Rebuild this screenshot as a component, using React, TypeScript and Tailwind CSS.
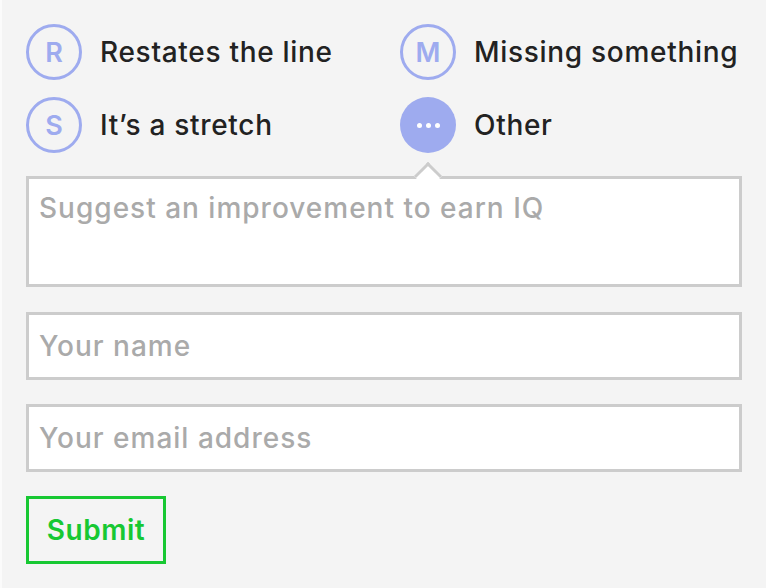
import React from "react";

const font = { fontFamily: "Inter, 'Noto Sans', sans-serif" };

function Letter({ l }: { l: string }) {
  return (
    <div className="w-[56px] h-[56px] rounded-full border-[3px] border-[#9eabef] flex items-center justify-center text-[#9eabef] text-[27px] font-semibold leading-none shrink-0">
      {l}
    </div>
  );
}

function Dots() {
  return (
    <div className="w-[56px] h-[56px] rounded-full bg-[#9eabef] flex items-center justify-center gap-[4px] shrink-0">
      <span className="w-[5px] h-[5px] rounded-full bg-white" />
      <span className="w-[5px] h-[5px] rounded-full bg-white" />
      <span className="w-[5px] h-[5px] rounded-full bg-white" />
    </div>
  );
}

function Option({ icon, label }: { icon: React.ReactNode; label: string }) {
  return (
    <div className="flex items-center gap-[18px]">
      {icon}
      <span className="text-[28px] font-medium text-[#222222] leading-none tracking-[0.7px] whitespace-nowrap">{label}</span>
    </div>
  );
}

export default function App() {
  return (
    <div
      className="w-[766px] h-[588px] bg-[#f4f4f4] border-l-[2px] border-[#fbfbfb] pl-[24px] pr-[24px] pt-[24px]"
      style={font}
    >
      <div className="grid grid-cols-[374px_1fr] gap-y-[17px]">
        <Option icon={<Letter l="R" />} label="Restates the line" />
        <Option icon={<Letter l="M" />} label="Missing something" />
        <Option icon={<Letter l="S" />} label="It’s a stretch" />
        <Option icon={<Dots />} label="Other" />
      </div>

      <div className="relative mt-[23px] w-[716px]">
        <textarea
          placeholder="Suggest an improvement to earn IQ"
          className="block w-full h-[111px] bg-white border-[3px] border-[#cccccc] px-[10px] pt-[13px] text-[28px] font-medium text-[#222] placeholder:text-[#aaaaaa] resize-none outline-none leading-[1.2] tracking-[1px]"
        />
        <div className="absolute left-[387px] top-[-14px] w-[30px] h-[17px] overflow-hidden">
          <div className="absolute left-[5px] top-[4px] w-[20px] h-[20px] bg-white border-t-[3px] border-l-[3px] border-[#cccccc] rotate-45" />
        </div>
      </div>

      <input
        placeholder="Your name"
        className="block mt-[25px] w-[716px] h-[68px] bg-white border-[3px] border-[#cccccc] px-[10px] text-[28px] font-medium text-[#222] placeholder:text-[#aaaaaa] outline-none tracking-[1px]"
      />
      <input
        placeholder="Your email address"
        className="block mt-[24px] w-[716px] h-[68px] bg-white border-[3px] border-[#cccccc] px-[10px] text-[28px] font-medium text-[#222] placeholder:text-[#aaaaaa] outline-none tracking-[1px]"
      />

      <button className="mt-[24px] w-[140px] h-[68px] border-[3px] border-[#17c832] text-[#17c832] text-[28px] font-semibold flex items-center justify-center tracking-[0.5px]">
        Submit
      </button>
    </div>
  );
}
